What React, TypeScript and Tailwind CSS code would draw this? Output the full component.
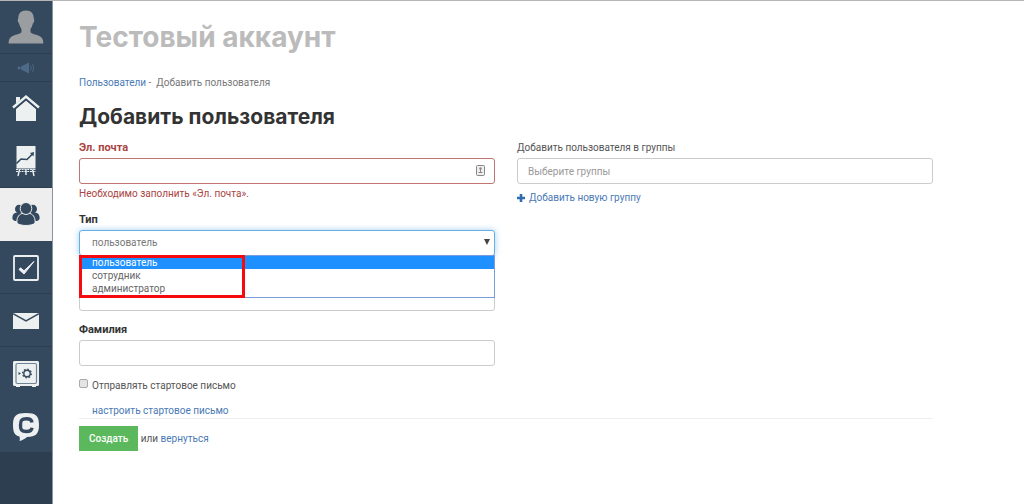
import { useState, type ReactNode } from 'react';
import clsx from 'clsx';

const USER_TYPES = ['пользователь', 'сотрудник', 'администратор'];

const LINK = 'text-[#4a7ab5] hover:underline';
const LABEL = 'mb-0.5 block pt-px';
const LABEL_BOLD = 'mb-0.5 block pt-px text-[11px] leading-4 font-bold';
const INPUT = 'block h-[26px] w-full rounded-[3px] border bg-white px-2.5 text-[10px] text-[#777] outline-none';

function AvatarIcon() {
  return (
    <svg width="36" height="36" viewBox="0 0 36 36" fill="#9a9ea0">
      <path d="M18 1.500c5 0 7.800 3 7.700 7.500 0 1 .8 1 .5 3-.3 1.800-1 2.200-1.400 2.800-.5 2.700-1.600 4-2.300 5.200v3c.5 1.700 4 2 7 3.300 4.200 1.600 5.700 3 5.900 8.200H.6c.2-5.200 1.700-6.600 5.900-8.200 3-1.300 6.500-1.600 7-3.300v-3c-.7-1.200-1.800-2.500-2.300-5.200-.4-.6-1.100-1-1.400-2.800-.3-2 .5-2 .5-3C10.200 4.500 13 1.500 18 1.500z" />
    </svg>
  );
}

function MegaphoneIcon() {
  return (
    <svg width="18" height="12" viewBox="0 0 18 12" fill="#4d6b88">
      <circle cx="2" cy="6" r="1.500" />
      <path d="M4 4.500 12 .5v11L4 7.500z" />
      <path d="M13.500 3.500q1.500 2.500 0 5M15.500 2q2.400 4 0 8" fill="none" stroke="#4d6b88" strokeWidth=".8" />
    </svg>
  );
}

function HomeIcon() {
  return (
    <svg width="28" height="28" viewBox="0 0 28 28" fill="#ecf0f1">
      <path d="M4 2h4v4L4 9.500z" />
      <path d="M14 5.500 24 14v12H4V14z" />
      <path d="M1.500 13.200 14 2.800l12.500 10.400" fill="none" stroke="#34495e" strokeWidth="4" />
      <path d="M1 12.500 14 1.600l13 10.900" fill="none" stroke="#ecf0f1" strokeWidth="2.400" />
    </svg>
  );
}

function ChartIcon() {
  return (
    <svg width="22" height="32" viewBox="0 0 22 32">
      <path d="M1.500 0h19v22.500h-19z" fill="#ecf0f1" />
      <path d="M1 23.500h20M1 25.500h20" stroke="#ecf0f1" strokeWidth="1.200" strokeDasharray="2 .8" />
      <path d="M4.500 23.500 3 30M11 23.500V29M17.500 23.500 19 30" stroke="#ecf0f1" strokeWidth="1.400" />
      <path d="M1.500 17.500 6 13l6 .5 6-6" fill="none" stroke="#34495e" strokeWidth="1.600" />
      <path d="m15 7 4-1-.5 4.500z" fill="#34495e" />
    </svg>
  );
}

function UsersIcon() {
  return (
    <svg width="28" height="26" viewBox="0 0 28 26" fill="#34495e">
      <ellipse cx="7" cy="7" rx="4" ry="4.300" />
      <ellipse cx="21" cy="7" rx="4" ry="4.300" />
      <path d="M5 10.500h5V19H3c-2.500-.8-3-2.200-2.500-4.500.4-2.300 1.500-3.500 4.500-4zM23 10.500h-5V19h7c2.500-.8 3-2.200 2.500-4.500-.4-2.300-1.500-3.500-4.500-4z" />
      <g stroke="#eee">
        <path d="M10 11.500c-4 1.200-5.500 5.500-5 9.500 2.500 3.300 15.500 3.300 18 0 .5-4-1-8.300-5-9.500z" />
        <ellipse cx="14" cy="6.500" rx="5.800" ry="6" />
      </g>
    </svg>
  );
}

function CheckIcon() {
  return (
    <svg width="26" height="26" viewBox="0 0 26 26" fill="none" stroke="#ecf0f1">
      <rect x="1" y="1" width="24" height="24" rx="1" strokeWidth="1.800" />
      <path d="M6 14.500 11 19 21 6.500 11 15.800 7.500 12.800z" fill="#ecf0f1" />
    </svg>
  );
}

function MailIcon() {
  return (
    <svg width="26" height="16" viewBox="0 0 26 16">
      <path d="M0 0h26v16H0z" fill="#ecf0f1" />
      <path d="m0 .7 13 7.300L26 .7" fill="none" stroke="#34495e" strokeWidth="1.500" />
    </svg>
  );
}

function SafeIcon() {
  return (
    <svg width="26" height="26" viewBox="0 0 26 26">
      <path d="M1 0h24l1 1v23l-1 1h-2v1h-4v-1H7v1H3v-1H1l-1-1V1z" fill="#ecf0f1" />
      <rect x="3" y="2.500" width="20.500" height="20" rx="1.500" fill="none" stroke="#6f8394" strokeWidth="1.200" />
      <circle cx="14" cy="12.500" r="3.200" fill="none" stroke="#34495e" strokeWidth="1.400" />
      <circle cx="14" cy="12.500" r="4.400" fill="none" stroke="#34495e" strokeWidth="1.200" strokeDasharray="1.700" />
      <path d="M5.500 11v3l2.500-1.500z" fill="#34495e" />
    </svg>
  );
}

function ChatIcon() {
  return (
    <svg width="28" height="30" viewBox="0 0 28 30">
      <path d="M14 1c9.500 0 13 2.500 13 12s-3.500 11.500-12 12c-2.500 2-5 3.500-7.500 4 .5-1.500.4-3 0-4.500C2.500 23.500 1 20 1 13 1 3.500 4.500 1 14 1z" fill="#ecf0f1" />
      <path d="M20 10.500c-.3-2.700-1.800-3.700-5.500-3.700-5 0-6 1.500-6 6.400s1 6.300 6 6.300c3.700 0 5.200-1 5.500-3.700" fill="none" stroke="#34495e" strokeWidth="3.400" />
    </svg>
  );
}

const NAV_ITEMS: { title: string; icon: ReactNode; tone: string }[] = [
  { title: 'Главная', icon: <HomeIcon />, tone: 'border-[#34495e] bg-[#34495e]' },
  { title: 'Отчёты', icon: <ChartIcon />, tone: 'border-[#2c3e50] bg-[#34495e]' },
  { title: 'Пользователи', icon: <UsersIcon />, tone: 'border-[#eee] bg-[#eee]' },
  { title: 'Задания', icon: <CheckIcon />, tone: 'border-[#2c3e50] bg-[#34495e]' },
  { title: 'Почта', icon: <MailIcon />, tone: 'border-[#2c3e50] bg-[#34495e]' },
  { title: 'Сейф', icon: <SafeIcon />, tone: 'border-[#34495e] bg-[#34495e]' },
  { title: 'Чат', icon: <ChatIcon />, tone: 'border-[#2c3e50] bg-[#34495e]' },
];

function Sidebar() {
  return (
    <nav className="flex w-[53px] shrink-0 flex-col border-r border-[#8a949e] bg-[#2c3e50]">
      <a href="#" aria-label="Профиль" className="flex h-[53px] items-center justify-center border-b border-[#2c3e50] bg-[#34495e]">
        <AvatarIcon />
      </a>
      <a href="#" aria-label="Новости" className="flex h-7 items-center justify-center border-b border-[#2c3e50] bg-[#34495e]">
        <MegaphoneIcon />
      </a>
      {NAV_ITEMS.map(item => (
        <a
          key={item.title}
          href="#"
          aria-label={item.title}
          className={clsx('flex h-[53px] items-center justify-center border-b pt-px', item.tone)}
        >
          {item.icon}
        </a>
      ))}
    </nav>
  );
}

function TypeSelect() {
  const [value, setValue] = useState(USER_TYPES[0]);

  return (
    <div className="relative">
      <select
        id="type"
        value={value}
        onChange={e => setValue(e.target.value)}
        className={clsx(INPUT, 'appearance-none border-[#66afe9] pl-3 shadow-[0_0_6px_rgba(102,175,233,0.6)]')}
      >
        {USER_TYPES.map(t => (
          <option key={t}>{t}</option>
        ))}
      </select>
      <svg width="6" height="7" viewBox="0 0 6 7" className="pointer-events-none absolute top-[9px] right-[5px]">
        <path d="M0 0h6L3 6z" fill="#444" />
      </svg>
      <ul className="absolute top-[25px] left-0 z-10 w-full border border-[#7a9bdc] bg-white pb-0.5 leading-[13px] text-[#666]">
        {USER_TYPES.map(t => (
          <li
            key={t}
            onClick={() => setValue(t)}
            className={clsx('pl-3', t === value && 'bg-[#1e90ff] text-white')}
          >
            {t}
          </li>
        ))}
      </ul>
      <div className="pointer-events-none absolute top-[25px] left-0 z-20 h-[43px] w-[166px] border-[3px] border-[#f50a0f]" />
    </div>
  );
}

export default function App() {
  return (
    <div className="flex min-h-screen border-t border-[#b5b5b5] bg-white font-['Roboto','Liberation_Sans',sans-serif] text-[10px] leading-4 text-[#555]">
      <Sidebar />
      <main className="min-w-0 flex-1 pt-4 pr-[91px] pb-8 pl-[26px]">
        <h1 className="font-['Inter','Roboto',sans-serif] text-[28px] leading-10 font-bold text-[#bbb]">Тестовый аккаунт</h1>
        <div className="mt-[18px] text-[#777]">
          <a href="#" className={LINK}>Пользователи</a> - &nbsp;Добавить пользователя
        </div>
        <h2 className="mt-3 font-['Inter','Roboto',sans-serif] text-[21px] leading-7 font-bold text-[#333]">Добавить пользователя</h2>

        <form onSubmit={e => e.preventDefault()}>
          <div className="mt-2 grid grid-cols-2 gap-[22px]">
            <div className="flex flex-col gap-2.5">
              <div>
                <label htmlFor="email" className={clsx(LABEL_BOLD, 'text-[#a94442]')}>Эл. почта</label>
                <div className="relative">
                  <input id="email" type="email" className={clsx(INPUT, 'border-[#c07573]')} />
                  <svg width="9" height="11" viewBox="0 0 9 11" className="absolute top-[7px] right-2.5">
                    <rect x=".5" y=".5" width="8" height="10" rx="1" fill="#eee" stroke="#888" />
                    <circle cx="4.500" cy="3.500" r="1.200" fill="#888" />
                    <path d="M4.500 4v3M2.500 7.500h4" stroke="#888" />
                  </svg>
                </div>
                <p className="-mb-px pt-0.5 text-[#a94442]">Необходимо заполнить «Эл. почта».</p>
              </div>
              <div>
                <label htmlFor="type" className={clsx(LABEL_BOLD, 'text-[#333]')}>Тип</label>
                <TypeSelect />
              </div>
              {/* the open list covers this label */}
              <input aria-label="Имя" className={clsx(INPUT, 'mt-[19px] border-[#ccc]')} />
              <div>
                <label htmlFor="surname" className={clsx(LABEL_BOLD, 'text-[#333]')}>Фамилия</label>
                <input id="surname" className={clsx(INPUT, 'border-[#ccc]')} />
              </div>
            </div>

            <div>
              <label htmlFor="groups" className={LABEL}>Добавить пользователя в группы</label>
              <input id="groups" placeholder="Выберите группы" className={clsx(INPUT, 'border-[#ccc] placeholder:text-[#999]')} />
              <a href="#" className={clsx(LINK, 'mt-1.5 inline-flex items-center gap-1')}>
                <svg width="8" height="8" viewBox="0 0 8 8" fill="#2f6cb0">
                  <path d="M2.700 0h2.600v2.700H8v2.600H5.300V8H2.700V5.300H0V2.700h2.700z" />
                </svg>
                Добавить новую группу
              </a>
            </div>
          </div>

          <div className="mt-3 flex items-start gap-1">
            <input
              id="send"
              type="checkbox"
              className="mt-px size-[9px] appearance-none rounded-[2px] border border-[#aaa] bg-[#e4e4e4] checked:bg-[#4a7ab5]"
            />
            <label htmlFor="send">Отправлять стартовое письмо</label>
          </div>
          <a href="#" className={clsx(LINK, 'mt-2.5 ml-[13px] block w-fit leading-[14px]')}>настроить стартовое письмо</a>

          <div className="border-t border-[#eee] pt-[7px]">
            <button type="submit" className="h-[25px] bg-[#5cb85c] px-2.5 font-medium text-white">Создать</button>{' '}
            или <a href="#" className={LINK}>вернуться</a>
          </div>
        </form>
      </main>
    </div>
  );
}
